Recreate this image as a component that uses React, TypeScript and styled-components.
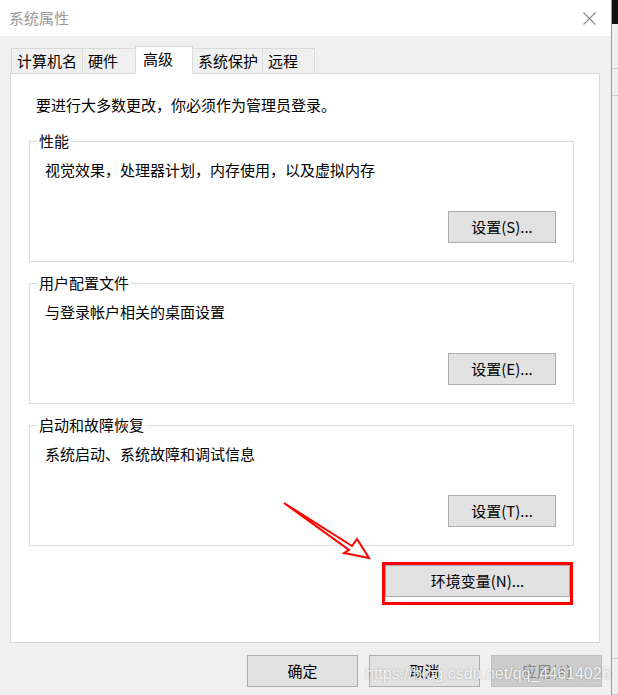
import React from 'react';
import styled, { createGlobalStyle } from 'styled-components';

const GlobalStyle = createGlobalStyle`
  html, body {
    margin: 0;
    padding: 0;
    background: #f0f0f0;
  }
  body {
    font-family: "Noto Sans CJK SC", "Microsoft YaHei", sans-serif;
    font-size: 15px;
    color: #000;
  }
  * {
    box-sizing: border-box;
  }
`;

const Page = styled.div`
  position: relative;
  display: flex;
  width: 618px;
  height: 695px;
  overflow: hidden;
`;

const Window = styled.div`
  position: relative;
  display: flex;
  flex-direction: column;
  width: 612px;
  height: 100%;
  border-right: 1px solid #9c9c9c;
`;

const TitleBar = styled.div`
  display: flex;
  align-items: center;
  justify-content: space-between;
  height: 36px;
  padding: 0 15px 0 9px;
  background: #fff;
`;

const Title = styled.span`
  color: #9a9a9a;
  line-height: 20px;
`;

const Body = styled.div`
  flex: 1;
  display: flex;
  flex-direction: column;
  padding: 10px 11px 0 10px;
  background: #f0f0f0;
`;

const TabRow = styled.div`
  display: flex;
  align-items: flex-end;
  height: 27px;
  padding-left: 1px;
`;

const Tab = styled.div<{ $w: number; $active?: boolean }>`
  position: relative;
  width: ${(p) => p.$w}px;
  height: ${(p) => (p.$active ? 28 : 25)}px;
  margin-bottom: ${(p) => (p.$active ? -1 : 0)}px;
  padding: 2px 0 0 ${(p) => (p.$active ? 7 : 5)}px;
  border: 1px solid #d9d9d9;
  border-bottom: none;
  background: ${(p) => (p.$active ? '#fff' : '#f0f0f0')};
  line-height: 20px;
  white-space: nowrap;
  z-index: ${(p) => (p.$active ? 1 : 0)};

  & + & {
    margin-left: -1px;
  }
`;

const Panel = styled.div`
  display: flex;
  flex-direction: column;
  height: 570px;
  padding: 21px 25px 0 18px;
  background: #fff;
  border: 1px solid #d9d9d9;
`;

const Intro = styled.div`
  margin-left: 7px;
  line-height: 20px;
`;

const Group = styled.fieldset`
  margin: 16px 0 0;
  padding: 0;
  min-width: 0;
  border: 1px solid #dcdcdc;

  & + & {
    margin-top: 11px;
  }
`;

const Legend = styled.legend`
  margin-left: 7px;
  padding: 0 2px;
  line-height: 20px;
`;

const GroupBody = styled.div`
  display: flex;
  flex-direction: column;
  justify-content: space-between;
  height: 110px;
  padding: 9px 17px 18px 15px;
`;

const Desc = styled.div`
  line-height: 20px;
`;

const Button = styled.button<{ $w: number; $disabled?: boolean }>`
  align-self: flex-end;
  width: ${(p) => p.$w}px;
  height: 32px;
  padding: 0;
  border: 1px solid ${(p) => (p.$disabled ? '#bfbfbf' : '#adadad')};
  background: ${(p) => (p.$disabled ? '#cccccc' : '#e1e1e1')};
  color: ${(p) => (p.$disabled ? '#838383' : '#000')};
  font-family: inherit;
  font-size: 15px;
  line-height: 20px;
`;

const EnvFrame = styled.div`
  align-self: flex-end;
  margin: 16px 1px 0 0;
  padding-bottom: 5px;
  border: 3px solid #ff0000;
`;

const ButtonBar = styled.div`
  display: flex;
  justify-content: flex-end;
  gap: 11px;
  margin-right: -2px;
  padding-top: 12px;
`;

const Arrow = styled.svg`
  position: absolute;
  left: 280px;
  top: 498px;
  pointer-events: none;
`;

const Strip = styled.div`
  display: flex;
  flex-direction: column;
  width: 6px;
  height: 100%;
`;

const StripCell = styled.div<{ $h: number; $dark?: boolean }>`
  height: ${(p) => p.$h}px;
  background: ${(p) => (p.$dark ? '#111' : '#efefef')};
  border-bottom: 1px solid ${(p) => (p.$dark ? '#111' : '#c9c9c9')};
`;

const Watermark = styled.div`
  position: absolute;
  left: 365px;
  top: 663px;
  font-family: "Liberation Sans", Arial, sans-serif;
  font-size: 16px;
  line-height: 22px;
  color: rgba(255, 255, 255, 0.85);
  text-shadow: 0 0 2px rgba(0, 0, 0, 0.3);
  white-space: nowrap;
  pointer-events: none;
`;

const tabs = [
  { label: '计算机名', w: 72 },
  { label: '硬件', w: 54 },
  { label: '高级', w: 58, active: true },
  { label: '系统保护', w: 71 },
  { label: '远程', w: 53 },
];

const groups = [
  { title: '性能', desc: '视觉效果，处理器计划，内存使用，以及虚拟内存', btn: '设置(S)...' },
  { title: '用户配置文件', desc: '与登录帐户相关的桌面设置', btn: '设置(E)...' },
  { title: '启动和故障恢复', desc: '系统启动、系统故障和调试信息', btn: '设置(T)...' },
];

export default function App() {
  return (
    <Page>
      <GlobalStyle />
      <Window>
        <TitleBar>
          <Title>系统属性</Title>
          <svg width="13" height="13" viewBox="0 0 13 13">
            <path d="M0.5 0.5 L12.5 12.5 M12.5 0.5 L0.5 12.5" stroke="#8a8a8a" strokeWidth="1.1" fill="none" />
          </svg>
        </TitleBar>
        <Body>
          <TabRow>
            {tabs.map((t) => (
              <Tab key={t.label} $w={t.w} $active={t.active}>
                {t.label}
              </Tab>
            ))}
          </TabRow>
          <Panel>
            <Intro>要进行大多数更改，你必须作为管理员登录。</Intro>
            {groups.map((g) => (
              <Group key={g.title}>
                <Legend>{g.title}</Legend>
                <GroupBody>
                  <Desc>{g.desc}</Desc>
                  <Button $w={108}>{g.btn}</Button>
                </GroupBody>
              </Group>
            ))}
            <EnvFrame>
              <Button $w={185}>环境变量(N)...</Button>
            </EnvFrame>
          </Panel>
          <ButtonBar>
            <Button $w={111}>确定</Button>
            <Button $w={111}>取消</Button>
            <Button $w={111} $disabled>应用(A)</Button>
          </ButtonBar>
        </Body>
        <Arrow width="95" height="65" viewBox="0 0 95 65">
          <polygon
            points="4,5 72,48 77,41 89,60 64,55 69,52"
            fill="#fff"
            stroke="#ff0000"
            strokeWidth="2"
            strokeLinejoin="miter"
          />
        </Arrow>
      </Window>
      <Strip>
        <StripCell $h={24} $dark />
        <StripCell $h={45} />
        <StripCell $h={27} />
        <StripCell $h={563} />
        <StripCell $h={36} />
      </Strip>
      <Watermark>https://blog.csdn.net/qq_44614026</Watermark>
    </Page>
  );
}
